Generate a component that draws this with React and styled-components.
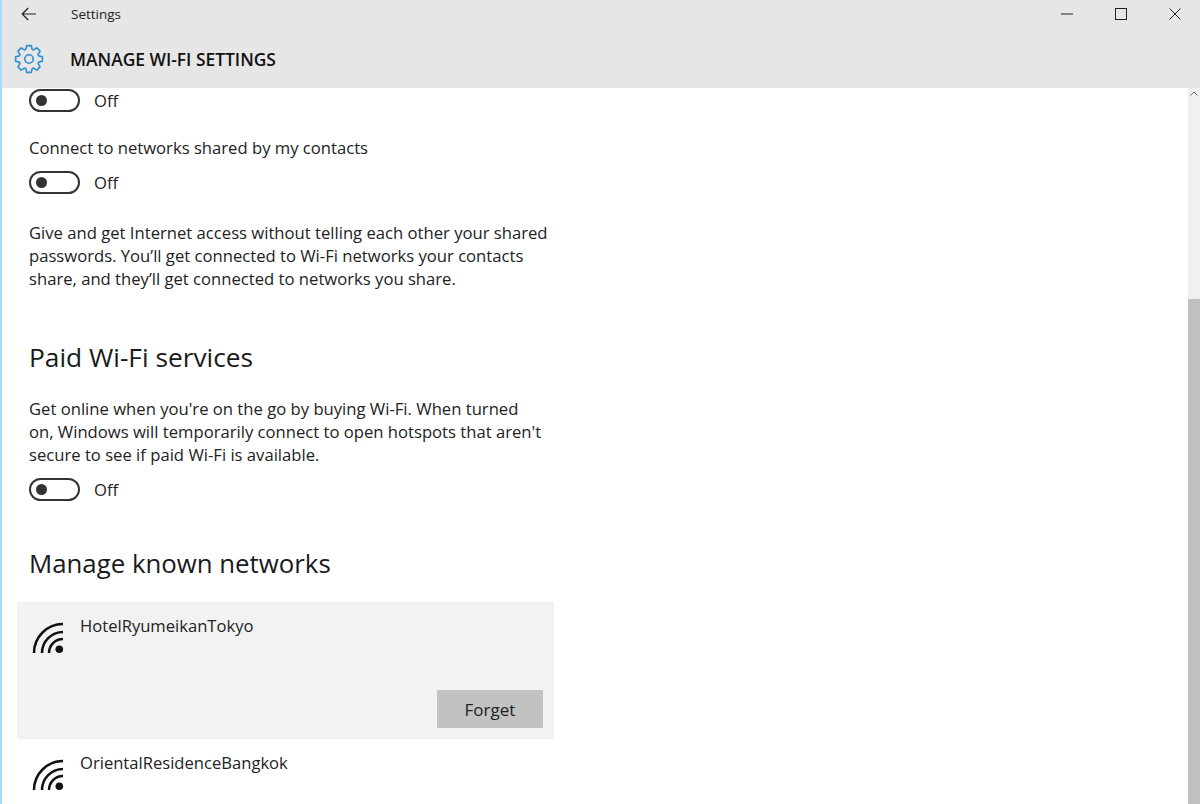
import React from "react";
import styled, { createGlobalStyle } from "styled-components";

const Global = createGlobalStyle`
  html, body { margin: 0; padding: 0; background: #fff; }
  body { font-family: "Open Sans", "Noto Sans", sans-serif; color: #1a1a1a; }
`;

const Page = styled.div`
  width: 1200px; height: 804px; overflow: hidden;
  display: flex; flex-direction: column;
  border-left: 2px solid #a6d8fa; box-sizing: border-box;
`;
const Header = styled.header`
  height: 88px; flex: none; background: #e6e6e6;
  display: flex; flex-direction: column;
`;
const TitleBar = styled.div`
  height: 27px; display: flex; align-items: center; gap: 8px; padding-right: 2.5px;
`;
const BackButton = styled.div`
  width: 69px; margin-right: -8px; padding-left: 19px; box-sizing: border-box; display: flex;
`;
const AppName = styled.span`
  font-size: 13.5px; color: #222; flex: 1;
`;
const WinButton = styled.div`
  width: 46px; display: flex; justify-content: center;
`;
const TitleRow = styled.div`
  display: flex; align-items: center; height: 61px; padding: 3px 0 0 12px; box-sizing: border-box;
`;
const PageTitle = styled.h1`
  margin: 0 0 0 26px; font-size: 17.4px; font-weight: 600; color: #111;
`;
const Body = styled.div`
  flex: 1; display: flex; min-height: 0;
`;
const Content = styled.main`
  flex: 1; padding: 1px 0 0 27px; min-width: 0;
`;
const ScrollTrack = styled.div`
  width: 12px; flex: none; background: #f0f0f0; display: flex; flex-direction: column;
`;
const ArrowUp = styled.div`
  height: 211px; display: flex; justify-content: center; padding-top: 3px; box-sizing: border-box;
`;
const Thumb = styled.div`
  flex: 1; background: #c0c0c0;
`;
const ToggleRow = styled.div`
  display: flex; align-items: center; gap: 14px; height: 22px;
`;
const Toggle = styled.div`
  width: 51px; height: 23px; border: 2.5px solid #333; border-radius: 12px; box-sizing: border-box;
  display: flex; align-items: center; padding-left: 4.5px;
  &::before { content: ""; width: 11px; height: 11px; border-radius: 50%; background: #333; }
`;
const OffLabel = styled.span`
  font-size: 16.65px; color: #222;
`;
const Label = styled.div`
  font-size: 16.65px; line-height: 23px; margin: 25px 0 12px; color: #222;
`;
const Paragraph = styled.p`
  width: ${p => p.$width}px; margin: ${p => p.$top}px 0 ${p => p.$bottom}px;
  font-size: 16.65px; line-height: 23px; color: #222;
`;
const Heading = styled.h2`
  margin: ${p => p.$top}px 0 ${p => p.$bottom}px; font-size: ${p => p.$size}px; line-height: 34px; font-weight: 400; color: #1a1a1a;
`;
const NetworkList = styled.div`
  margin-left: -12px; width: 537px;
`;
const Network = styled.div`
  padding: 12px 11px 11px 15px; background: ${p => (p.$selected ? "#f2f2f2" : "transparent")};
  height: ${p => (p.$selected ? 137 : 70)}px; box-sizing: border-box;
  display: flex; flex-direction: column;
`;
const NetworkTop = styled.div`
  display: flex; gap: 16px;
`;
const NetworkName = styled.span`
  font-size: 16.6px; line-height: 24px; color: #222;
`;
const ForgetButton = styled.button`
  margin-top: auto; align-self: flex-end; width: 106px; height: 38px; border: 0; padding: 0;
  background: #c2c2c2; font: inherit; font-size: 17px; color: #222;
`;
const WifiSvg = styled.svg`
  flex: none; margin-top: 8px;
`;

const gearPath = (() => {
  const cx = 15, cy = 15, teeth = 8, ro = 13.6, ri = 10.2;
  const pts = [];
  for (let i = 0; i < teeth; i++) {
    const a = (i * 2 * Math.PI) / teeth - Math.PI / 2;
    [[ri, -0.31], [ro, -0.17], [ro, 0.17], [ri, 0.31]].forEach(([r, d]) => {
      pts.push(`${(cx + r * Math.cos(a + d)).toFixed(2)} ${(cy + r * Math.sin(a + d)).toFixed(2)}`);
    });
  }
  return `M${pts.join("L")}Z`;
})();

const Back = () => (
  <svg width="16" height="14" viewBox="0 0 16 14" fill="none" stroke="#222" strokeWidth="1.2">
    <path d="M15 7H1.2M7.2 1 1.2 7l6 6" />
  </svg>
);
const Gear = () => (
  <svg width="30" height="30" viewBox="0 0 30 30" fill="none" stroke="#2e8fd0" strokeWidth="1.6" strokeLinejoin="round">
    <path d={gearPath} />
    <circle cx="15" cy="15" r="4.2" />
  </svg>
);
const Wifi = () => (
  <WifiSvg width="32" height="32" viewBox="0 0 32 32" fill="none" stroke="#111" strokeWidth="2.5">
    <path d="M2 31A29 29 0 0 1 31 2" />
    <path d="M10 31A21 21 0 0 1 31 10" />
    <path d="M17 31A14 14 0 0 1 31 17" />
    <circle cx="27.3" cy="27.3" r="3.8" fill="#111" stroke="none" />
  </WifiSvg>
);
const Off = () => (
  <ToggleRow><Toggle /><OffLabel>Off</OffLabel></ToggleRow>
);

export default function App() {
  return (
    <>
      <Global />
      <Page>
        <Header>
          <TitleBar>
            <BackButton><Back /></BackButton>
            <AppName>Settings</AppName>
            <WinButton>
              <svg width="12" height="2" viewBox="0 0 12 2"><path d="M0 1h12" stroke="#222" /></svg>
            </WinButton>
            <WinButton>
              <svg width="12" height="12" viewBox="0 0 12 12" fill="none"><rect x=".5" y=".5" width="11" height="11" stroke="#222" /></svg>
            </WinButton>
            <WinButton>
              <svg width="12" height="12" viewBox="0 0 12 12" fill="none"><path d="M.5.5l11 11M11.5.5l-11 11" stroke="#222" /></svg>
            </WinButton>
          </TitleBar>
          <TitleRow>
            <Gear />
            <PageTitle>MANAGE WI-FI SETTINGS</PageTitle>
          </TitleRow>
        </Header>
        <Body>
          <Content>
            <Off />
            <Label>Connect to networks shared by my contacts</Label>
            <Off />
            <Paragraph $width={524} $top={28} $bottom={0}>
              Give and get Internet access without telling each other your shared passwords. You’ll get connected to Wi-Fi networks your contacts share, and they’ll get connected to networks you share.
            </Paragraph>
            <Heading $size={26.3} $top={50} $bottom={23}>Paid Wi-Fi services</Heading>
            <Paragraph $width={514} $top={0} $bottom={12}>
              Get online when you're on the go by buying Wi-Fi. When turned on, Windows will temporarily connect to open hotspots that aren't secure to see if paid Wi-Fi is available.
            </Paragraph>
            <Off />
            <Heading $size={25.8} $top={46} $bottom={22}>Manage known networks</Heading>
            <NetworkList>
              <Network $selected>
                <NetworkTop><Wifi /><NetworkName>HotelRyumeikanTokyo</NetworkName></NetworkTop>
                <ForgetButton>Forget</ForgetButton>
              </Network>
              <Network>
                <NetworkTop><Wifi /><NetworkName>OrientalResidenceBangkok</NetworkName></NetworkTop>
              </Network>
            </NetworkList>
          </Content>
          <ScrollTrack>
            <ArrowUp>
              <svg width="8" height="5" viewBox="0 0 8 5" fill="none"><path d="M.5 4.5 4 1l3.5 3.5" stroke="#666" /></svg>
            </ArrowUp>
            <Thumb />
          </ScrollTrack>
        </Body>
      </Page>
    </>
  );
}
